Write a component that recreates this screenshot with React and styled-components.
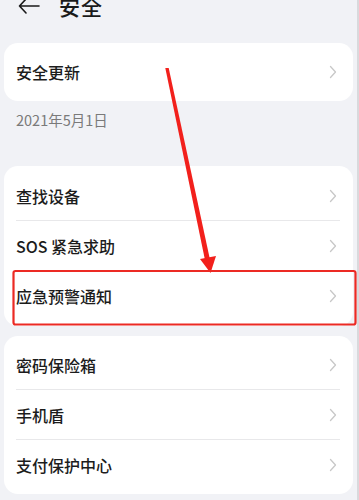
import React from "react";
import styled, { createGlobalStyle } from "styled-components";

const Global = createGlobalStyle`
  html, body { margin: 0; padding: 0; background: #f1f2f6; }
  body { font-family: "Noto Sans CJK SC", "Noto Sans", sans-serif; overflow: hidden; }
`;

const Page = styled.div`
  position: relative;
  width: 359px;
  height: 500px;
  overflow: hidden;
  background: #f1f2f6;
  box-sizing: border-box;
  border-right: 2px solid #d9d9dc;
`;

const Header = styled.div`
  display: flex;
  align-items: center;
  gap: 19px;
  height: 34px;
  margin-top: -11px;
  padding-left: 18px;
  color: #1a1a1a;
`;

const Title = styled.span`
  font-size: 21px;
  font-weight: 500;
  letter-spacing: 1px;
`;

const Card = styled.div`
  margin: ${(p) => p.$top}px 4px 0 4px;
  width: 349px;
  background: #ffffff;
  border-radius: 14px;
  padding: ${(p) => p.$pad}px 0;
`;

const Row = styled.div`
  display: flex;
  align-items: center;
  justify-content: space-between;
  height: ${(p) => p.$h}px;
  padding: 0 16px 0 12px;
  position: relative;
  &:not(:last-child)::after {
    content: "";
    position: absolute;
    left: 12px;
    right: 13px;
    bottom: 0;
    height: 1px;
    background: #e8e8ea;
  }
`;

const Label = styled.span`
  font-size: 16px;
  font-weight: 500;
  color: #1c1c1c;
`;

const DateText = styled.div`
  padding: 9px 0 0 16px;
  line-height: 20px;
  font-size: 14.5px;
  color: #7a7a7a;
`;

const Overlay = styled.svg`
  position: absolute;
  left: 0;
  top: 0;
  pointer-events: none;
`;

const Chevron = () => (
  <svg width="8" height="14" viewBox="0 0 8 14">
    <path d="M1.5 1.5 L6.5 7 L1.5 12.5" fill="none" stroke="#c8c8c8" strokeWidth="1.3" strokeLinecap="round" strokeLinejoin="round" />
  </svg>
);

const BackArrow = () => (
  <svg width="22" height="16" viewBox="0 0 22 16">
    <path d="M8 1 L1.5 8 L8 15 M1.5 8 H21" fill="none" stroke="#1a1a1a" strokeWidth="1.6" strokeLinecap="round" strokeLinejoin="round" />
  </svg>
);

const Item = ({ label, h = 50 }) => (
  <Row $h={h}>
    <Label>{label}</Label>
    <Chevron />
  </Row>
);

export default function App() {
  return (
    <>
      <Global />
      <Page>
        <Header>
          <BackArrow />
          <Title>安全</Title>
        </Header>
        <Card $top={20} $pad={0}>
          <Item label="安全更新" h={58} />
        </Card>
        <DateText>2021年5月1日</DateText>
        <Card $top={36} $pad={5}>
          <Item label="查找设备" />
          <Item label="SOS 紧急求助" />
          <Item label="应急预警通知" />
        </Card>
        <Card $top={10} $pad={4}>
          <Item label="密码保险箱" />
          <Item label="手机盾" />
          <Item label="支付保护中心" />
        </Card>
        <Overlay width="359" height="500" viewBox="0 0 359 500">
          <polygon points="165.3,68 168.7,68 210.5,262 205.5,262.6" fill="#f2201c" />
          <polygon points="200,259 216,256 210.5,273" fill="#f2201c" />
          <rect x="13.5" y="271" width="342" height="53.5" rx="2" fill="none" stroke="#ec2a24" strokeWidth="2.2" />
        </Overlay>
      </Page>
    </>
  );
}
